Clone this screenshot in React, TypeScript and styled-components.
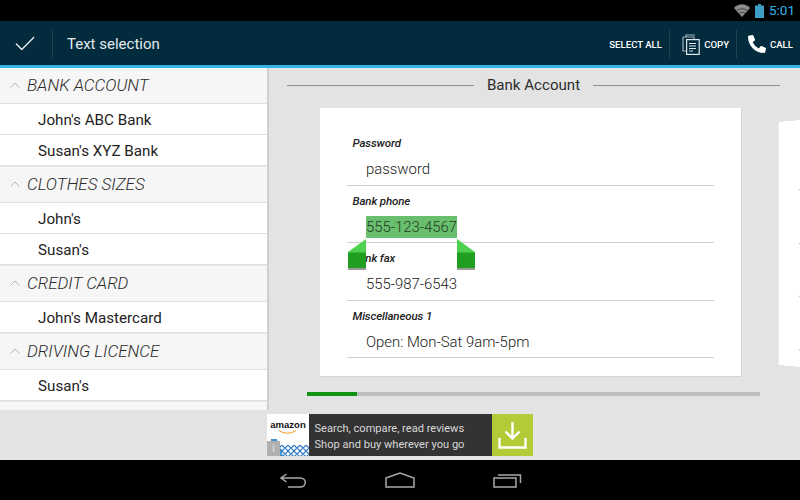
import styled, { createGlobalStyle } from "styled-components";
import { FiCheck } from "react-icons/fi";
import { FaPhoneAlt } from "react-icons/fa";

const Global = createGlobalStyle`
  html, body { margin: 0; padding: 0; }
  body { font-family: Roboto, "Liberation Sans", sans-serif; background: #000; overflow: hidden; }
`;

const Screen = styled.div`
  width: 800px;
  height: 500px;
  display: flex;
  flex-direction: column;
  position: relative;
  overflow: hidden;
  background: #e3e3e3;
`;

const StatusBar = styled.div`
  height: 21px;
  background: #000;
  display: flex;
  align-items: center;
  justify-content: flex-end;
  padding-right: 7px;
  box-sizing: border-box;
  gap: 5px;
`;

const Clock = styled.span`
  color: #33b5e5;
  font-size: 13.5px;
  line-height: 21px;
  width: 24px;
  margin-left: 0;
`;

const ActionBar = styled.div`
  height: 47px;
  box-sizing: border-box;
  padding-top: 2px;
  background: #022b3d;
  border-bottom: 3px solid #33b5e5;
  display: flex;
  align-items: center;
  color: #fff;
`;

const DoneButton = styled.div`
  width: 53px;
  height: 28px;
  border-right: 1px solid #1c4556;
  margin-right: 14px;
  display: flex;
  align-items: center;
  padding-left: 12px;
  box-sizing: border-box;
  svg { display: block; }
`;

const BarTitle = styled.div`
  font-size: 15px;
  color: #e4ebee;
  flex: 1;
`;

const BarAction = styled.div<{ $w: number; $divider?: boolean }>`
  width: ${(p) => p.$w}px;
  height: 28px;
  box-sizing: border-box;
  display: flex;
  align-items: center;
  justify-content: flex-end;
  gap: 4px;
  padding-right: 7px;
  font-size: 9.6px;
  font-weight: 500;
  border-right: ${(p) => (p.$divider ? "1px solid #1c4556" : "none")};
`;

const Middle = styled.div`
  height: 342px;
  display: flex;
`;

const Sidebar = styled.div`
  width: 269px;
  box-sizing: border-box;
  background: #fff;
  border-right: 2px solid #cfcfcf;
  overflow: hidden;
`;

const Group = styled.div`
  &:first-child > div:first-child { height: 36px; border-top: none; }
`;

const GroupHeader = styled.div`
  height: 37px;
  box-sizing: border-box;
  background: #f6f6f6;
  border-top: 1px solid #e8e8e8;
  border-bottom: 1px solid #e0e0e0;
  display: flex;
  align-items: center;
  padding: 0 0 2px 10px;
  gap: 7px;
  font-size: 17px;
  font-weight: 300;
  font-style: italic;
  color: #2a2a2a;
`;

const Item = styled.div`
  height: 31px;
  box-sizing: border-box;
  background: #fff;
  border-bottom: 1px solid #e0e0e0;
  padding: 1px 0 0 38px;
  display: flex;
  align-items: center;
  font-size: 15.2px;
  color: #222;
`;

const Pager = styled.div`
  flex: 1;
  display: flex;
  flex-direction: column;
  background: #e3e3e3;
  overflow: hidden;
`;

const PagerTitle = styled.div`
  height: 40px;
  display: flex;
  align-items: center;
  gap: 13px;
  padding: 0 20px 6px 18px;
  box-sizing: border-box;
  font-size: 15.1px;
  color: #2c2c2c;
`;

const TitleRule = styled.div`
  flex: 1;
  height: 1px;
  background: #8f8f8f;
`;

const Pages = styled.div`
  display: flex;
  gap: 36px;
  padding-left: 51px;
  height: 269px;
  align-items: flex-start;
`;

const Card = styled.div`
  width: 422px;
  height: 269px;
  flex: none;
  box-sizing: border-box;
  background: #fff;
  border-bottom: 1px solid #d4d4d4;
  border-right: 1px solid #d8d8d8;
  padding: 20px 27px 0 27px;
`;

const NextCard = styled.div`
  width: 40px;
  height: 243px;
  flex: none;
  box-sizing: border-box;
  margin-top: 14px;
  padding: 68px 0 0 20px;
  background: #fff;
  border-left: 1px solid #eee;
  transform-origin: left center;
  transform: perspective(300px) rotateY(-12deg);
`;

const PeekTick = styled.div`
  height: 1px;
  margin-bottom: 51.7px;
  background: #bcbcbc;
`;

const Field = styled.div`
  height: 57.6px;
  box-sizing: border-box;
  border-bottom: 1px solid #cfcfcf;
  padding: 7px 0 0 5.5px;
  position: relative;
`;

const FieldLabel = styled.div`
  font-size: 11.5px;
  font-weight: 500;
  letter-spacing: -0.12px;
  font-style: italic;
  line-height: 16px;
  color: #222;
`;

const FieldValue = styled.div`
  font-size: 14.9px;
  font-weight: 300;
  line-height: 20px;
  color: #1a1a1a;
  margin: 8px 0 0 13.5px;
`;

const Selected = styled.span`
  background: #6abf6e;
  padding: 2px 0;
  color: #1f3d20;
`;

const Handle = styled.svg<{ $x: number }>`
  position: absolute;
  left: ${(p) => p.$x}px;
  top: 239px;
  z-index: 2;
`;

const Progress = styled.div`
  height: 4px;
  width: 453px;
  margin: 15px 0 0 38px;
  background: #bdbdbd;
`;

const ProgressFill = styled.div`
  height: 100%;
  background: #0f9310;
`;

const AdRow = styled.div`
  height: 50px;
  display: flex;
  padding: 4px 0 4px 267px;
  box-sizing: border-box;
  background: #e3e3e3;
`;

const AdLogo = styled.div`
  width: 42px;
  background: #fff;
  position: relative;
  overflow: hidden;
  display: flex;
  flex-direction: column;
  align-items: center;
`;

const AdWord = styled.div`
  font-family: "Liberation Sans", sans-serif;
  font-size: 9.5px;
  font-weight: 700;
  color: #111;
  margin-top: 5px;
  line-height: 11px;
`;

const InfoBadge = styled.div`
  position: absolute;
  left: 0;
  bottom: 0;
  width: 13px;
  height: 15px;
  background: #b0b0b0;
  color: #e8e8e8;
  font-size: 10px;
  line-height: 15px;
  text-align: center;
`;

const AdBasket = styled.svg`
  position: absolute;
  left: 0;
  bottom: 0;
`;

const AdText = styled.div`
  width: 183px;
  background: #333;
  color: #d8d8d8;
  font-size: 11.1px;
  line-height: 16px;
  padding: 7px 0 0 5.5px;
  box-sizing: border-box;
`;

const AdButton = styled.div`
  width: 41px;
  background: #b2cc38;
  display: flex;
  align-items: center;
  justify-content: center;
`;

const NavBar = styled.div`
  height: 40px;
  background: #000;
  display: flex;
  align-items: center;
  justify-content: center;
  gap: 78px;
  padding-left: 2px;
`;

const groups = [
  { name: "BANK ACCOUNT", items: ["John's ABC Bank", "Susan's XYZ Bank"] },
  { name: "CLOTHES SIZES", items: ["John's", "Susan's"] },
  { name: "CREDIT CARD", items: ["John's Mastercard"] },
  { name: "DRIVING LICENCE", items: ["Susan's"] },
];

const Chevron = () => (
  <svg width="10" height="6" viewBox="0 0 10 6" fill="none" stroke="#b5b5b5" strokeWidth="1">
    <path d="M0.5 5.5 L5 1 L9.5 5.5" />
  </svg>
);

const HandleIcon = ({ x, flip }: { x: number; flip?: boolean }) => (
  <Handle $x={x} width="18" height="31" viewBox="0 0 18 31">
    <g transform={flip ? "translate(18 0) scale(-1 1)" : undefined}>
      <rect x="0" y="29" width="18" height="2" fill="#9a9a9a" />
      <path d="M0 13 L18 0 V14 H0 Z" fill="#4fd050" />
      <rect x="0" y="13.5" width="18" height="15.5" fill="#1f9e20" />
    </g>
  </Handle>
);

export default function App() {
  return (
    <Screen>
      <Global />
      <StatusBar>
        <svg width="16" height="13" viewBox="0 0 16 13">
          <path d="M0 4 C4.5 -1 11.5 -1 16 4 L8 13 Z" fill="#8c8c8c" />
          <path d="M2.6 6.6 C5.5 4.3 10.5 4.3 13.4 6.6 M5 9.4 C6.8 8 9.2 8 11 9.4" stroke="#333" strokeWidth="0.8" fill="none" />
        </svg>
        <svg width="9" height="14" viewBox="0 0 9 14">
          <rect x="3" y="0" width="3" height="2" fill="#3d9dc4" />
          <rect x="0" y="1.5" width="9" height="12.5" fill="#3d9dc4" />
        </svg>
        <Clock>5:01</Clock>
      </StatusBar>
      <ActionBar>
        <DoneButton>
          <FiCheck size={26} color="#f0f0f0" strokeWidth={1.2} />
        </DoneButton>
        <BarTitle>Text selection</BarTitle>
        <BarAction $w={70} $divider>SELECT ALL</BarAction>
        <BarAction $w={67} $divider>
          <svg width="18" height="21" viewBox="0 0 18 21" fill="none" stroke="#dfe6e9" strokeWidth="1.2">
            <path d="M4 2.5 V1 H13 M1 3 H12 V5 M1 3 V17 H4" stroke="#9fb0b8" />
            <rect x="4.6" y="5.6" width="12.6" height="14.8" />
            <path d="M7 9.5 H14 M7 12 H14 M7 14.5 H14 M7 17 H11" strokeWidth="1" />
          </svg>
          COPY
        </BarAction>
        <BarAction $w={63}>
          <FaPhoneAlt size={18} />
          <span>CALL</span>
        </BarAction>
      </ActionBar>
      <Middle>
        <Sidebar>
          {groups.map((g) => (
            <Group key={g.name}>
              <GroupHeader>
                <Chevron />
                {g.name}
              </GroupHeader>
              {g.items.map((i) => (
                <Item key={g.name + i}>{i}</Item>
              ))}
            </Group>
          ))}
          <GroupHeader />
        </Sidebar>
        <Pager>
          <PagerTitle>
            <TitleRule />
            Bank Account
            <TitleRule />
          </PagerTitle>
          <Pages>
            <Card>
              <Field>
                <FieldLabel>Password</FieldLabel>
                <FieldValue>password</FieldValue>
              </Field>
              <Field>
                <FieldLabel>Bank phone</FieldLabel>
                <FieldValue>
                  <Selected>555-123-4567</Selected>
                </FieldValue>
              </Field>
              <Field>
                <FieldLabel>Bank fax</FieldLabel>
                <FieldValue>555-987-6543</FieldValue>
              </Field>
              <Field>
                <FieldLabel>Miscellaneous 1</FieldLabel>
                <FieldValue>Open: Mon-Sat 9am-5pm</FieldValue>
              </Field>
            </Card>
            <NextCard>
              <PeekTick />
              <PeekTick />
              <PeekTick />
              <PeekTick />
            </NextCard>
          </Pages>
          <Progress>
            <ProgressFill style={{ width: `${(50 / 453) * 100}%` }} />
          </Progress>
        </Pager>
      </Middle>
      <HandleIcon x={348} />
      <HandleIcon x={457} flip />
      <AdRow>
        <AdLogo>
          <AdWord>amazon</AdWord>
          <svg width="24" height="5" viewBox="0 0 24 5" fill="none" stroke="#f39a1c" strokeWidth="1">
            <path d="M3 0.5 C8 4 15 4 20 0.5" />
          </svg>
          <AdBasket width="42" height="17" viewBox="0 0 42 17">
            <defs>
              <pattern id="mesh" width="6" height="6" patternUnits="userSpaceOnUse">
                <rect width="6" height="6" fill="#fff" />
                <path d="M0 3 L3 0 L6 3 L3 6 Z" fill="none" stroke="#2f78c4" strokeWidth="1.2" />
              </pattern>
            </defs>
            <rect x="13" y="6" width="29" height="11" fill="url(#mesh)" />
            <path d="M4 1 H9 L15 17" fill="none" stroke="#3f8fd0" strokeWidth="2" />
          </AdBasket>
          <InfoBadge>i</InfoBadge>
        </AdLogo>
        <AdText>
          Search, compare, read reviews
          <br />
          Shop and buy wherever you go
        </AdText>
        <AdButton>
          <svg width="29" height="29" viewBox="0 0 29 29" fill="none" stroke="#fff" strokeWidth="2.4">
            <path d="M14.5 1 V17 M7.5 10.5 L14.5 17.5 L21.5 10.5" />
            <path d="M1.5 17 V26.5 H27.5 V17" />
          </svg>
        </AdButton>
      </AdRow>
      <NavBar>
        <svg width="27" height="15" viewBox="0 0 27 15" fill="none" stroke="#a8a8a8" strokeWidth="1.5">
          <path d="M6.5 1 L1 5 L6.5 9 M1 5 H20 C27 5 27 14 20 14 H8" />
        </svg>
        <svg width="30" height="16" viewBox="0 0 30 16" fill="none" stroke="#a8a8a8" strokeWidth="1.5">
          <path d="M1 6 L15 1 L29 6 V15 H1 Z" />
        </svg>
        <svg width="29" height="15" viewBox="0 0 29 15" fill="none" stroke="#a8a8a8" strokeWidth="1.5">
          <rect x="1" y="5" width="22" height="9" />
          <path d="M5 2 H27.5 V10" />
        </svg>
      </NavBar>
    </Screen>
  );
}
